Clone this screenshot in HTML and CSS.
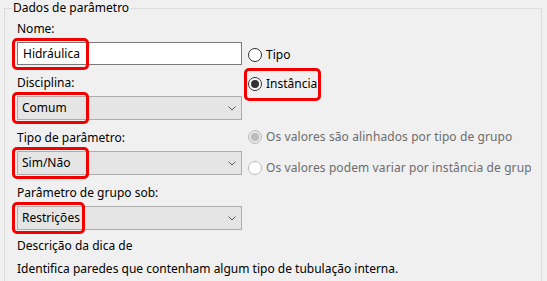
FILE: index.html
```html
<!DOCTYPE html>
<html lang="pt-BR">
<head>
    <meta charset="UTF-8">
    <title>Dados de parâmetro</title>
    <link rel="stylesheet" href="styles.css">
</head>
<body>
    <fieldset class="group">
        <legend>Dados de parâmetro</legend>

        <div class="columns">
            <div class="left-col">
                <label class="label label-first">Nome:</label>
                <div class="field">
                    <div class="textbox">Hidráulica</div>
                    <span class="mark"></span>
                </div>

                <label class="label">Disciplina:</label>
                <div class="field">
                    <div class="select">
                        <span>Comum</span>
                        <svg class="chevron" width="8" height="5" viewBox="0 0 8 5"><polyline points="0.5,0.5 4,4 7.5,0.5" /></svg>
                    </div>
                    <span class="mark"></span>
                </div>

                <label class="label">Tipo de parâmetro:</label>
                <div class="field">
                    <div class="select">
                        <span>Sim/Não</span>
                        <svg class="chevron" width="8" height="5" viewBox="0 0 8 5"><polyline points="0.5,0.5 4,4 7.5,0.5" /></svg>
                    </div>
                    <span class="mark"></span>
                </div>

                <label class="label">Parâmetro de grupo sob:</label>
                <div class="field">
                    <div class="select">
                        <span>Restrições</span>
                        <svg class="chevron" width="8" height="5" viewBox="0 0 8 5"><polyline points="0.5,0.5 4,4 7.5,0.5" /></svg>
                    </div>
                    <span class="mark mark-narrow"></span>
                </div>
            </div>

            <div class="right-col">
                <div class="radio radio-tipo">
                    <span class="circle"></span>
                    <span>Tipo</span>
                </div>
                <div class="radio radio-instancia">
                    <span class="circle checked"></span>
                    <span>Instância</span>
                    <span class="mark mark-radio"></span>
                </div>
                <div class="radio radio-disabled radio-alinhados">
                    <span class="circle checked"></span>
                    <span>Os valores são alinhados por tipo de grupo</span>
                </div>
                <div class="radio radio-disabled radio-variar">
                    <span class="circle"></span>
                    <span>Os valores podem variar por instância de grupo</span>
                </div>
            </div>
        </div>

        <p class="desc-title">Descrição da dica de</p>
        <p class="desc">Identifica paredes que contenham algum tipo de tubulação interna.</p>
    </fieldset>
</body>
</html>
```

FILE: styles.css
```css
* {
    margin: 0;
    padding: 0;
    box-sizing: border-box;
}

body {
    font-family: "Noto Sans", "Open Sans", sans-serif;
    font-size: 12px;
    line-height: 16px;
    color: #000;
    background-color: #f0f0f0;
    height: 281px;
    overflow: hidden;
}

.group {
    margin-left: 4px;
    width: 537px;
    height: 284px;
    border: 1px solid #dcdcdc;
    padding: 0 10px 0 12px;
}

.group legend {
    margin-left: -5px;
    padding: 0 1px;
    line-height: 16px;
}

.columns {
    display: flex;
}

.left-col {
    width: 225px;
    flex: none;
    display: flex;
    flex-direction: column;
}

.label {
    display: block;
    margin-top: 10px;
}

.label-first {
    margin-top: 5px;
}

.field {
    position: relative;
    margin-top: 5px;
}

.textbox {
    height: 23px;
    background-color: #fff;
    border: 1px solid #7a7a7a;
    padding: 2px 5px;
    line-height: 17px;
}

.select {
    height: 24px;
    background-color: #e5e5e5;
    border: 1px solid #adadad;
    padding: 3px 4px;
    line-height: 16px;
    display: flex;
    align-items: center;
    justify-content: space-between;
}

.chevron {
    fill: none;
    stroke: #5a5a5a;
    stroke-width: 1;
    margin-right: 1px;
}

.mark {
    position: absolute;
    left: -5px;
    top: -4px;
    width: 77px;
    height: 32px;
    border: 3px solid #f20000;
    border-radius: 5px;
}

.mark-narrow {
    width: 73px;
}

.right-col {
    width: 289px;
    flex: none;
    overflow: hidden;
    white-space: nowrap;
    padding-left: 6px;
    display: flex;
    flex-direction: column;
}

.radio {
    position: relative;
    display: flex;
    align-items: center;
    gap: 4px;
    height: 16px;
}

.radio-tipo {
    margin-top: 31px;
}

.radio-instancia {
    margin-top: 13px;
}

.radio-alinhados {
    margin-top: 37px;
}

.radio-variar {
    margin-top: 15px;
}

.circle {
    flex: none;
    width: 14px;
    height: 14px;
    border-radius: 50%;
    border: 1px solid #333;
    background-color: #fff;
    display: flex;
    align-items: center;
    justify-content: center;
}

.circle.checked::after {
    content: "";
    width: 8px;
    height: 8px;
    border-radius: 50%;
    background-color: #333;
}

.radio-disabled {
    color: #6d6d6d;
    letter-spacing: 0.1px;
}

.radio-disabled .circle {
    border-color: #bcbcbc;
}

.radio-disabled .circle.checked {
    background-color: #e6e6e6;
}

.radio-disabled .circle.checked::after {
    background-color: #bcbcbc;
}

.mark-radio {
    left: -4px;
    top: -8px;
    width: 77px;
    height: 33px;
}

.desc-title {
    margin-top: 8px;
}

.desc {
    margin-top: 7px;
}
```
